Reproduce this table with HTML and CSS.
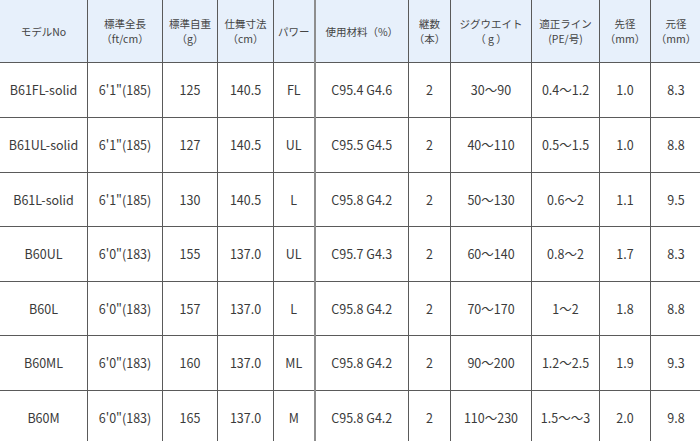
FILE: index.html
```html
<!DOCTYPE html>
<html lang="ja">
<head>
<meta charset="utf-8">
<link rel="stylesheet" href="styles.css">
</head>
<body>
<table class="spec">
  <colgroup>
    <col class="c1"><col class="c2"><col class="c3"><col class="c4"><col class="c5"><col class="c6"><col class="c7"><col class="c8"><col class="c9"><col class="c10"><col class="c11">
  </colgroup>
  <thead>
    <tr>
      <th>モデルNo</th>
      <th>標準全長<br>（ft/cm）</th>
      <th>標準自重<br>（g）</th>
      <th>仕舞寸法<br>（cm）</th>
      <th>パワー</th>
      <th>使用材料（%）</th>
      <th>継数<br>（本）</th>
      <th>ジグウエイト<br>（ g ）</th>
      <th>適正ライン<br>(PE/号)</th>
      <th>先径<br>（mm）</th>
      <th>元径<br>（mm）</th>
    </tr>
  </thead>
  <tbody>
    <tr class="r55"><td>B61FL-solid</td><td>6'1"(185)</td><td>125</td><td>140.5</td><td>FL</td><td>C95.4 G4.6</td><td>2</td><td>30～90</td><td>0.4～1.2</td><td>1.0</td><td>8.3</td></tr>
    <tr class="r55"><td>B61UL-solid</td><td>6'1"(185)</td><td>127</td><td>140.5</td><td>UL</td><td>C95.5 G4.5</td><td>2</td><td>40～110</td><td>0.5～1.5</td><td>1.0</td><td>8.8</td></tr>
    <tr class="r54"><td>B61L-solid</td><td>6'1"(185)</td><td>130</td><td>140.5</td><td>L</td><td>C95.8 G4.2</td><td>2</td><td>50～130</td><td>0.6～2</td><td>1.1</td><td>9.5</td></tr>
    <tr class="r55"><td>B60UL</td><td>6'0"(183)</td><td>155</td><td>137.0</td><td>UL</td><td>C95.7 G4.3</td><td>2</td><td>60～140</td><td>0.8～2</td><td>1.7</td><td>8.3</td></tr>
    <tr class="r54"><td>B60L</td><td>6'0"(183)</td><td>157</td><td>137.0</td><td>L</td><td>C95.8 G4.2</td><td>2</td><td>70～170</td><td>1～2</td><td>1.8</td><td>8.8</td></tr>
    <tr class="r55"><td>B60ML</td><td>6'0"(183)</td><td>160</td><td>137.0</td><td>ML</td><td>C95.8 G4.2</td><td>2</td><td>90～200</td><td>1.2～2.5</td><td>1.9</td><td>9.3</td></tr>
    <tr class="r55"><td>B60M</td><td>6'0"(183)</td><td>165</td><td>137.0</td><td>M</td><td>C95.8 G4.2</td><td>2</td><td>110～230</td><td>1.5～～3</td><td>2.0</td><td>9.8</td></tr>
  </tbody>
</table>
</body>
</html>
```
FILE: styles.css
```css
html, body {
  margin: 0;
  padding: 0;
  background: #fff;
  overflow: hidden;
}
.spec {
  border-collapse: collapse;
  table-layout: fixed;
  width: 702px;
  margin: -1px 0 0 -1px;
  font-family: "Noto Sans CJK JP", "Noto Sans", sans-serif;
  color: #3a3a3a;
}
.c1 { width: 88px; }
.c2 { width: 75px; }
.c3 { width: 55px; }
.c4 { width: 56px; }
.c5 { width: 41px; }
.c6 { width: 94px; }
.c7 { width: 42px; }
.c8 { width: 81px; }
.c9 { width: 68px; }
.c10 { width: 51px; }
.c11 { width: 51px; }
.spec th, .spec td {
  border: 1px solid #5a5a5a;
  text-align: center;
  vertical-align: middle;
  padding: 0;
  overflow: hidden;
  white-space: nowrap;
}
.spec th {
  background: #e7f0fb;
  font-weight: normal;
  font-size: 10.5px;
  line-height: 15px;
  color: #444;
  height: 62px;
}
.spec td {
  font-size: 12.5px;
  line-height: 16px;
}
.r55 td { height: 54px; }
.r54 td { height: 53px; }
.spec th:nth-child(6), .spec td:nth-child(6) {
  border-left-color: #8e8e8e;
  border-left-width: 2px;
}
```
